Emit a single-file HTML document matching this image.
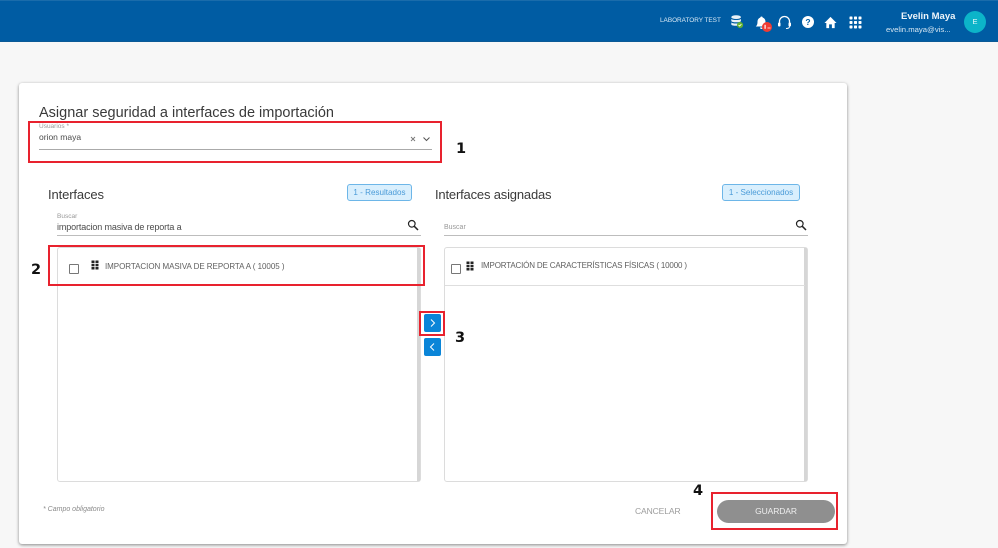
<!DOCTYPE html>
<html><head><meta charset="utf-8">
<style>
html,body{margin:0;padding:0}
body{width:998px;height:548px;overflow:hidden;background:#f7f7f7;position:relative;font-family:"Liberation Sans",sans-serif;color:#3c3c3c}
.a{position:absolute;white-space:nowrap}
.r{position:absolute;border:2px solid #e8222e;box-sizing:border-box}
.n{position:absolute;font:bold 14.5px "DejaVu Sans",sans-serif;color:#111;line-height:16px}
.h{font-size:13px;color:#3a3a3a;line-height:16px}
.badge{position:absolute;box-sizing:border-box;height:17px;border:1px solid #6db6e8;border-radius:3px;background:#d9effd;color:#4a9bd8;font-size:8.1px;line-height:15px;text-align:center;white-space:nowrap}
.line{position:absolute;height:1px;background:#bdbdbd}
.lab{font-size:7px;color:#999;line-height:8px}
.list{position:absolute;box-sizing:border-box;background:#fff;border:1px solid #dcdcdc;border-radius:3px}
.sb{position:absolute;top:0;bottom:0;right:0;width:3px;background:#d6d6d6}
.cb{position:absolute;box-sizing:border-box;width:10px;height:10px;border:1px solid #777;border-radius:1px;background:#fff}
.it{font-size:8px;color:#5f5f5f;line-height:10px}
.arrow{position:absolute;width:17px;height:18px;background:#0a85d8;border-radius:2px}
</style></head><body>
<div class="a" style="left:0;top:0;width:998px;height:42px;background:#005ca3;border-top:1px solid #1a6cab;border-bottom:1px solid #0b5a96;box-sizing:border-box"></div>
<div class="a" style="left:660px;top:16px;font-size:6.4px;color:#dcebf6;line-height:10px">LABORATORY TEST</div>

<svg class="a" style="left:730px;top:14px" width="14" height="15" viewBox="0 0 16 17">
<ellipse cx="7" cy="3.500" rx="5.500" ry="2.200" fill="#e8f1f7"/>
<path d="M1.500 5.500c1 1.800 10 1.800 11 0v2.500c-1 1.800-10 1.800-11 0z" fill="#e8f1f7"/>
<path d="M1.500 9.500c1 1.800 10 1.800 11 0v2.500c-1 1.800-10 1.800-11 0z" fill="#e8f1f7"/>
<circle cx="11.500" cy="12.500" r="3.500" fill="#63b32e"/>
<path d="M9.800 12.500l1.200 1.200 2-2.200" stroke="#fff" stroke-width="1" fill="none"/>
</svg>

<svg class="a" style="left:755px;top:15px" width="20" height="20" viewBox="0 0 20 20">
<path d="M6.500 1.500c.8 0 1.200.5 1.200 1.100 2 .6 2.800 2.200 2.800 4.400 0 2 .5 3.500 1.700 4.500H.8C2 10.500 2.500 9 2.500 7c0-2.200.8-3.800 2.800-4.400 0-.6.400-1.100 1.200-1.100z" fill="#fff"/>
<path d="M5 12.500h3a1.500 1.500 0 0 1-3 0z" fill="#fff"/>
<circle cx="12" cy="12" r="5" fill="#ef3b33"/>
<rect x="12.500" y="12.500" width="3" height="1" fill="#ffd0cc"/>
<rect x="9.500" y="9.800" width="1.200" height="4" fill="#fff"/>
</svg>

<svg class="a" style="left:777px;top:15px" width="15" height="15" viewBox="0 0 15 15">
<path d="M2.500 9V6.500a5 5 0 0 1 10 0V9" stroke="#fff" stroke-width="1.300" fill="none"/>
<rect x="1" y="7.500" width="2.500" height="4" rx="1" fill="#fff"/>
<rect x="11.500" y="7.500" width="2.500" height="4" rx="1" fill="#fff"/>
<path d="M12.500 11.500c0 1.300-1.500 2-3.500 2" stroke="#fff" fill="none"/>
</svg>

<svg class="a" style="left:802px;top:16px" width="12" height="12" viewBox="0 0 14 14">
<circle cx="7" cy="7" r="7" fill="#fff"/>
<text x="7" y="10.500" font-family="Liberation Sans" font-size="10" font-weight="bold" fill="#005ca3" text-anchor="middle">?</text>
</svg>

<svg class="a" style="left:824px;top:15.500px" width="13" height="13" viewBox="0 0 14 14">
<path d="M7 1L.5 7.500h2V13h3V9h3v4h3V7.500h2z" fill="#fff"/>
</svg>

<svg class="a" style="left:849px;top:15.500px" width="13" height="13" viewBox="0 0 13 13" fill="#fff">
<rect x="0.500" y="0.500" width="3" height="3" rx=".7"/><rect x="5" y="0.500" width="3" height="3" rx=".7"/><rect x="9.500" y="0.500" width="3" height="3" rx=".7"/>
<rect x="0.500" y="5" width="3" height="3" rx=".7"/><rect x="5" y="5" width="3" height="3" rx=".7"/><rect x="9.500" y="5" width="3" height="3" rx=".7"/>
<rect x="0.500" y="9.500" width="3" height="3" rx=".7"/><rect x="5" y="9.500" width="3" height="3" rx=".7"/><rect x="9.500" y="9.500" width="3" height="3" rx=".7"/>
</svg>

<div class="a" style="left:901px;top:11px;font-size:9.500px;font-weight:bold;color:#eef5fa;line-height:12px">Evelin Maya</div>
<div class="a" style="left:886px;top:25px;font-size:7.700px;color:#d5e6f2;line-height:10px">evelin.maya@vis...</div>
<div class="a" style="left:964px;top:11px;width:22px;height:22px;border-radius:50%;background:#0cb4c9;color:#e9fafc;font-size:7.500px;line-height:22px;text-align:center">E</div>

<div class="a" style="left:19px;top:83px;width:828px;height:461px;background:#fff;border-radius:3px;box-shadow:0 1px 3px rgba(0,0,0,.45)"></div>

<div class="a" style="left:39px;top:105px;font-size:14.500px;color:#3a3a3a;line-height:17px">Asignar seguridad a interfaces de importación</div>

<div class="r" style="left:28px;top:121px;width:414px;height:42px"></div>
<div class="a lab" style="left:39px;top:123px;font-size:6.500px">Usuarios *</div>
<div class="a" style="left:39px;top:132px;font-size:8.500px;color:#4c4c4c;line-height:11px">orion maya</div>
<div class="line" style="left:39px;top:149px;width:393px;background:#aaa"></div>
<svg class="a" style="left:409px;top:134px" width="24" height="10" viewBox="0 0 24 10">
<path d="M2 3l4 4M6 3L2 7" stroke="#777" stroke-width=".9" fill="none"/>
<path d="M14.500 3.500l3 3 3-3" stroke="#555" stroke-width="1" fill="none"/>
</svg>
<div class="n" style="left:456px;top:141px">1</div>

<div class="a h" style="left:48px;top:187px;letter-spacing:-.12px">Interfaces</div>
<div class="badge" style="left:347px;top:184px;width:65px">1 - Resultados</div>

<div class="a h" style="left:435px;top:187px;letter-spacing:-.18px">Interfaces asignadas</div>
<div class="badge" style="left:722px;top:184px;width:78px">1 - Seleccionados</div>

<div class="a lab" style="left:57px;top:213px;font-size:6.500px">Buscar</div>
<div class="a" style="left:57px;top:222px;font-size:9px;color:#4c4c4c;line-height:11px;letter-spacing:-.13px">importacion masiva de reporta a</div>
<div class="line" style="left:57px;top:235px;width:364px"></div>
<svg class="a" style="left:407px;top:219px" width="12" height="12" viewBox="0 0 12 12"><circle cx="4.800" cy="4.800" r="3.300" stroke="#222" stroke-width="1.200" fill="none"/><path d="M7.300 7.300L11 11" stroke="#222" stroke-width="1.500"/></svg>

<div class="a lab" style="left:444px;top:224px">Buscar</div>
<div class="line" style="left:444px;top:235px;width:364px"></div>
<svg class="a" style="left:795px;top:219px" width="12" height="12" viewBox="0 0 12 12"><circle cx="4.800" cy="4.800" r="3.300" stroke="#222" stroke-width="1.200" fill="none"/><path d="M7.300 7.300L11 11" stroke="#222" stroke-width="1.500"/></svg>

<div class="list" style="left:57px;top:247px;width:364px;height:235px"><div class="sb"></div></div>
<div class="cb" style="left:69px;top:264px"></div>
<svg class="a" style="left:91px;top:260px" width="8" height="10" viewBox="0 0 8 10" fill="#222"><rect x="0.500" y="0.500" width="3" height="2.500"/><rect x="4.500" y="0.500" width="3" height="2.500"/><rect x="0.500" y="3.800" width="3" height="2.500"/><rect x="4.500" y="3.800" width="3" height="2.500"/><rect x="0.500" y="7" width="3" height="2.500"/><rect x="4.500" y="7" width="3" height="2.500"/></svg>
<div class="a it" style="left:105px;top:262px;letter-spacing:-.04px">IMPORTACION MASIVA DE REPORTA A ( 10005 )</div>
<div class="r" style="left:48px;top:245px;width:377px;height:41px"></div>
<div class="n" style="left:31px;top:262px">2</div>

<div class="list" style="left:444px;top:247px;width:364px;height:235px"><div class="sb"></div></div>
<div class="a" style="left:445px;top:285px;width:360px;height:1px;background:#dedede"></div>
<div class="cb" style="left:451px;top:264px"></div>
<svg class="a" style="left:466px;top:261px" width="8" height="10" viewBox="0 0 8 10" fill="#222"><rect x="0.500" y="0.500" width="3" height="2.500"/><rect x="4.500" y="0.500" width="3" height="2.500"/><rect x="0.500" y="3.800" width="3" height="2.500"/><rect x="4.500" y="3.800" width="3" height="2.500"/><rect x="0.500" y="7" width="3" height="2.500"/><rect x="4.500" y="7" width="3" height="2.500"/></svg>
<div class="a it" style="left:481px;top:261px;letter-spacing:-.17px">IMPORTACIÓN DE CARACTERÍSTICAS FÍSICAS ( 10000 )</div>

<div class="arrow" style="left:424px;top:314px"><svg width="17" height="18" viewBox="0 0 17 18"><path d="M7 5.500l3.500 3.500-3.500 3.500" stroke="#fff" stroke-width="1" fill="none"/></svg></div>
<div class="arrow" style="left:424px;top:338px"><svg width="17" height="18" viewBox="0 0 17 18"><path d="M10 5.500L6.500 9l3.500 3.500" stroke="#fff" stroke-width="1" fill="none"/></svg></div>
<div class="r" style="left:419px;top:311px;width:26px;height:25px"></div>
<div class="n" style="left:455px;top:330px">3</div>

<div class="a" style="left:43px;top:505px;font-size:7px;font-style:italic;color:#8a8a8a;line-height:10px">* Campo obligatorio</div>
<div class="a" style="left:635px;top:506px;font-size:8.500px;color:#9c9c9c;line-height:11px;letter-spacing:-.1px">CANCELAR</div>
<div class="a" style="left:717px;top:500px;width:118px;height:23px;border-radius:12px;background:#8f8f8f;color:#eee;font-size:8.500px;line-height:23px;text-align:center;letter-spacing:-.1px">GUARDAR</div>
<div class="r" style="left:711px;top:492px;width:127px;height:38px"></div>
<div class="n" style="left:693px;top:483px">4</div>
</body></html>
